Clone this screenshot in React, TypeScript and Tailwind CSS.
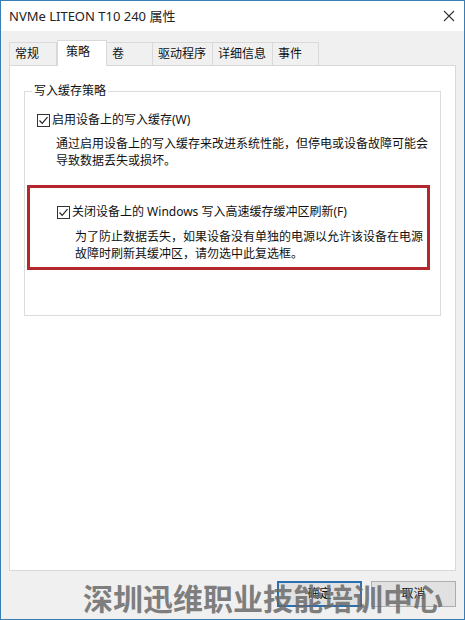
import React from 'react';

const tabs = ['常规', '策略', '卷', '驱动程序', '详细信息', '事件'];
const tabWidths = ['w-[48px]', 'w-[50px]', 'w-[46px]', 'w-[60px]', 'w-[60px]', 'w-[46px]'];

function CheckBox() {
    return (
        <svg width="13" height="13" viewBox="0 0 13 13" className="shrink-0">
            <rect x="0.5" y="0.5" width="12" height="12" fill="#fff" stroke="#333" />
            <path d="M2.5 6.5 L5.2 9.3 L10.5 3.2" fill="none" stroke="#222" strokeWidth="1.2" />
        </svg>
    );
}

function App() {
    return (
        <div className="w-[465px] h-[620px] flex flex-col border border-[#3a7db3] bg-[#f0f0f0] text-[#111] font-['Noto_Sans','Noto_Sans_CJK_SC',sans-serif] relative overflow-hidden">
            {/* title bar */}
            <div className="h-[30px] bg-white flex items-center justify-between pl-[8px] pr-[9px] shrink-0">
                <span className="text-[13px] leading-none text-[#222]">NVMe LITEON T10 240 属性</span>
                <svg width="12" height="12" viewBox="0 0 12 12">
                    <path d="M1 1 L11 11 M11 1 L1 11" stroke="#333" strokeWidth="1.1" />
                </svg>
            </div>

            <div className="flex-1 flex flex-col px-[8px] pt-[9px]">
                {/* tabs */}
                <div className="flex items-end h-[25px] relative z-10">
                    {tabs.map((t, i) =>
                        i === 1 ? (
                            <div key={t} className={`${tabWidths[i]} h-[26px] -mb-px bg-white border border-b-0 border-[#d9d9d9] flex items-start pt-[3px] pl-[8px] text-[12px] leading-[16px]`}>
                                {t}
                            </div>
                        ) : (
                            <div key={t} className={`${tabWidths[i]} h-[23px] bg-[#f0f0f0] border border-b-0 border-[#d9d9d9] ${i === 0 ? '' : 'border-l-0'} flex items-center pl-[5px] text-[12px] leading-[16px]`}>
                                {t}
                            </div>
                        )
                    )}
                </div>

                {/* panel */}
                <div className="h-[506px] bg-white border border-[#d9d9d9] px-[14px] pt-[17px] shrink-0">
                    <fieldset className="border border-[#dcdcdc] h-[233px] pl-[12px] pr-[10px]">
                        <legend className="px-[2px] -ml-[5px] text-[12px] leading-[16px]">写入缓存策略</legend>
                        <div className="flex items-center gap-[2px] mt-[13px] text-[12px] leading-[16px]">
                            <CheckBox />
                            <span>启用设备上的写入缓存(W)</span>
                        </div>
                        <p className="pl-[19px] mt-[8px] text-[12px] leading-[16.5px]">
                            通过启用设备上的写入缓存来改进系统性能，但停电或设备故障可能会导致数据丢失或损坏。
                        </p>
                        <div className="-ml-[10px] mt-[16px] border-[3px] border-[#b3272d] h-[85px] pl-[27px] pr-0 pt-[16px]">
                            <div className="flex items-center gap-[2px] text-[12px] leading-[16px]">
                                <CheckBox />
                                <span>关闭设备上的 Windows 写入高速缓存缓冲区刷新(F)</span>
                            </div>
                            <p className="pl-[18px] mt-[9px] text-[12px] leading-[16.5px]">
                                为了防止数据丢失，如果设备没有单独的电源以允许该设备在电源故障时刷新其缓冲区，请勿选中此复选框。
                            </p>
                        </div>
                    </fieldset>
                </div>

                {/* buttons */}
                <div className="flex justify-end gap-[9px] mt-[10px]">
                    <button className="w-[85px] h-[26px] bg-[#e1e1e1] border-2 border-[#2a6fb0] text-[12px] leading-none">确定</button>
                    <button className="w-[85px] h-[26px] bg-[#e1e1e1] border border-[#adadad] text-[12px] leading-none">取消</button>
                </div>
            </div>

            {/* watermark */}
            <div className="absolute left-[82px] top-[578px] text-[30px] leading-[36px] font-bold text-[#6a6a6a]/85 font-['Noto_Sans_CJK_SC',sans-serif] pointer-events-none">
                深圳迅维职业技能培训中心
            </div>
        </div>
    );
}

export default App;
